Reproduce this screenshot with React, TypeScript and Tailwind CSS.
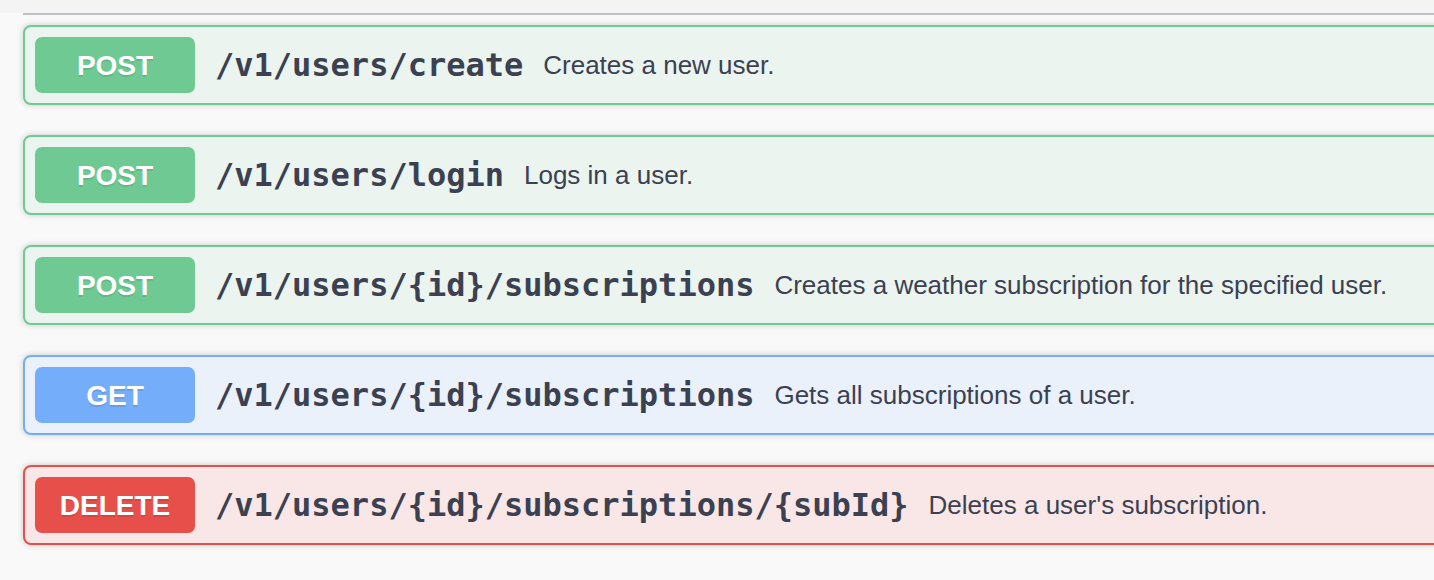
const ops = [
    { method: "POST", path: "/v1/users/create", desc: "Creates a new user." },
    { method: "POST", path: "/v1/users/login", desc: "Logs in a user." },
    { method: "POST", path: "/v1/users/{id}/subscriptions", desc: "Creates a weather subscription for the specified user." },
    { method: "GET", path: "/v1/users/{id}/subscriptions", desc: "Gets all subscriptions of a user." },
    { method: "DELETE", path: "/v1/users/{id}/subscriptions/{subId}", desc: "Deletes a user's subscription." },
];

const styles: Record<string, { card: string; badge: string }> = {
    POST: { card: "bg-[#ebf4ef] border-[#6fcb93]", badge: "bg-[#6fc993]" },
    GET: { card: "bg-[#ebf1fa] border-[#74adf9]", badge: "bg-[#74adf9]" },
    DELETE: { card: "bg-[#f9e7e7] border-[#e7504a]", badge: "bg-[#e7504a]" },
};

const App = () => {
    return (
        <div className="w-[1434px] h-[580px] overflow-hidden bg-[#f9f9f9]">
            <div className="h-[13px] bg-[#f4f4f4]" />
            <div className="pl-[23px] w-[1480px]">
                <div className="h-[2px] bg-[#c0bfc4]" />
                <div className="flex flex-col gap-[30px] mt-[10px]">
                    {ops.map((op, i) => (
                        <div
                            key={i}
                            className={`flex items-center h-[80px] border-2 rounded-[8px] px-[10px] shadow-[0_0_6px_rgba(0,0,0,0.19)] ${styles[op.method].card}`}
                        >
                            <div
                                className={`w-[160px] h-[56px] pt-[2px] rounded-[7px] flex items-center justify-center text-white font-bold text-[28px] [text-shadow:0_2px_0_rgba(0,0,0,0.1)] ${styles[op.method].badge}`}
                                style={{ fontFamily: '"Liberation Sans", Arial, sans-serif' }}
                            >
                                {op.method}
                            </div>
                            <span
                                className="pl-[20px] pr-[20px] text-[32px] font-bold text-[#3b4151]"
                                style={{ fontFamily: '"DejaVu Sans Mono", monospace' }}
                            >
                                {op.path}
                            </span>
                            <span
                                className="text-[26px] text-[#3b4151]"
                                style={{ fontFamily: '"Liberation Sans", Arial, sans-serif' }}
                            >
                                {op.desc}
                            </span>
                        </div>
                    ))}
                </div>
            </div>
        </div>
    );
};

export default App;
